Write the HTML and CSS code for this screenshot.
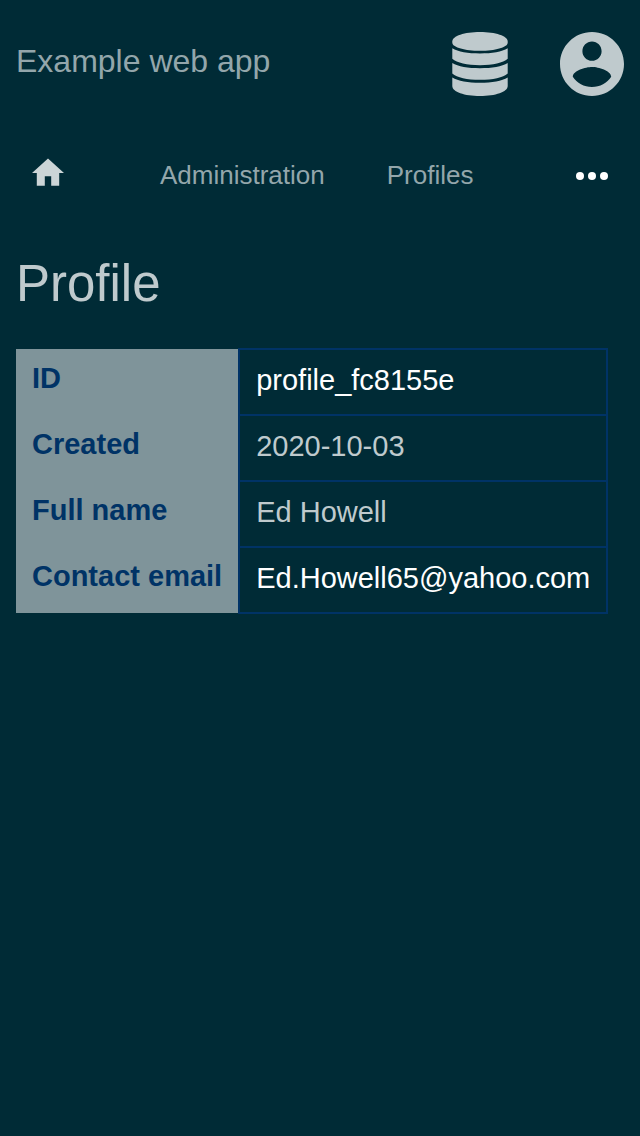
FILE: index.html
```html
<!DOCTYPE html>
<html lang="en">
<head>
<meta charset="utf-8">
<meta name="viewport" content="width=device-width, initial-scale=1">
<title>Profile - Example web app</title>
<link rel="stylesheet" href="styles.css">
</head>
<body>
<header class="header">
  <a class="brand" href="#">Example web app</a>
  <div class="header-actions">
    <button class="icon-button" type="button" aria-label="Database">
      <svg class="icon-large" viewBox="0 0 64 64" aria-hidden="true">
        <path d="M4.300 9.500C4.300 4 16.500 0 32 0s27.700 4 27.700 9.500v1.500C59 15.500 47 18.800 32 18.800S5 15.500 4.300 11z"/>
        <path d="M4.300 16.200C10 19.800 20 21.400 32 21.400s22-1.600 27.700-5.200v10.600C55 31 45 33.200 32 33.200S9 31 4.300 26.800z"/>
        <path d="M4.300 31C10 34.600 20 36.200 32 36.200S54 34.600 59.700 31v10.400C55 45.600 45 47.800 32 47.800S9 45.600 4.300 41.400z"/>
        <path d="M4.300 45.400C10 49 20 50.700 32 50.700s22-1.700 27.700-5.300v8.600C59.700 60 47.500 64 32 64S4.300 60 4.300 54z"/>
      </svg>
    </button>
    <button class="icon-button" type="button" aria-label="Account">
      <svg class="icon-large" viewBox="2 2 20 20" aria-hidden="true">
        <path d="M12 2C6.480 2 2 6.480 2 12s4.480 10 10 10 10-4.480 10-10S17.520 2 12 2zm0 3c1.660 0 3 1.340 3 3s-1.340 3-3 3-3-1.340-3-3 1.340-3 3-3zm0 14.200c-2.500 0-4.710-1.280-6-3.220.030-1.990 4-3.080 6-3.080 1.990 0 5.970 1.090 6 3.080-1.290 1.940-3.500 3.220-6 3.220z"/>
      </svg>
    </button>
  </div>
</header>
<nav class="nav" aria-label="Main">
  <a class="nav-home" href="#" aria-label="Home">
    <svg class="icon-small" viewBox="2 2 20 20" aria-hidden="true"><path d="M10 20v-6h4v6h5v-8h3L12 3 2 12h3v8z"/></svg>
  </a>
  <a class="nav-link" href="#">Administration</a>
  <a class="nav-link" href="#">Profiles</a>
  <button class="nav-more" type="button" aria-label="More">
    <svg class="icon-small" viewBox="0 0 32 32" aria-hidden="true"><circle cx="4" cy="16" r="4"/><circle cx="16" cy="16" r="4"/><circle cx="28" cy="16" r="4"/></svg>
  </button>
</nav>
<main class="main">
  <h1 class="title">Profile</h1>
  <table class="details">
    <tbody>
      <tr><th scope="row">ID</th><td><a class="value-link" href="#">profile_fc8155e</a></td></tr>
      <tr><th scope="row">Created</th><td>2020-10-03</td></tr>
      <tr><th scope="row">Full name</th><td>Ed Howell</td></tr>
      <tr><th scope="row">Contact email</th><td><a class="value-link" href="mailto:Ed.Howell65@yahoo.com">Ed.Howell65@yahoo.com</a></td></tr>
    </tbody>
  </table>
</main>
</body>
</html>
```
FILE: styles.css
```css
* { box-sizing: border-box; }

body {
  margin: 0;
  background: #002b36;
  color: #bfcacd;
  font-family: "Liberation Sans", Arial, sans-serif;
  font-size: 29px;
}

a { color: inherit; text-decoration: none; }

button {
  padding: 0;
  border: 0;
  background: none;
  color: inherit;
}

svg { display: block; fill: currentColor; }

.header {
  display: flex;
  justify-content: space-between;
  padding: 32px 16px;
}

.brand {
  padding-top: 10px;
  color: #93a6ab;
  font-size: 32px;
  line-height: 38px;
}

.header-actions { display: flex; gap: 48px; }

.icon-large { width: 64px; height: 64px; }

.nav {
  display: flex;
  align-items: center;
  gap: 62px;
  height: 64px;
  margin-top: 16px;
  padding: 0 32px;
  color: #93a6ab;
  font-size: 26px;
}

.nav-home { margin-right: 34px; padding-bottom: 6px; color: #ccd5d7; }

.nav-link { padding-bottom: 2px; }

.nav-more { margin-left: auto; color: #fff; }

.icon-small { width: 32px; height: 32px; }

.main { padding: 46px 16px; }

.title {
  margin: 0 0 34px;
  font-size: 51px;
  font-weight: 400;
  line-height: 60px;
}

.details { border-collapse: collapse; line-height: 32px; }

.details th {
  padding: 12px 16px 20px;
  background: #7f949a;
  color: #003366;
  text-align: left;
}

.details td {
  padding: 14px 16px 18px;
  border: 2px solid #003366;
}

.value-link { color: #fff; }
```
